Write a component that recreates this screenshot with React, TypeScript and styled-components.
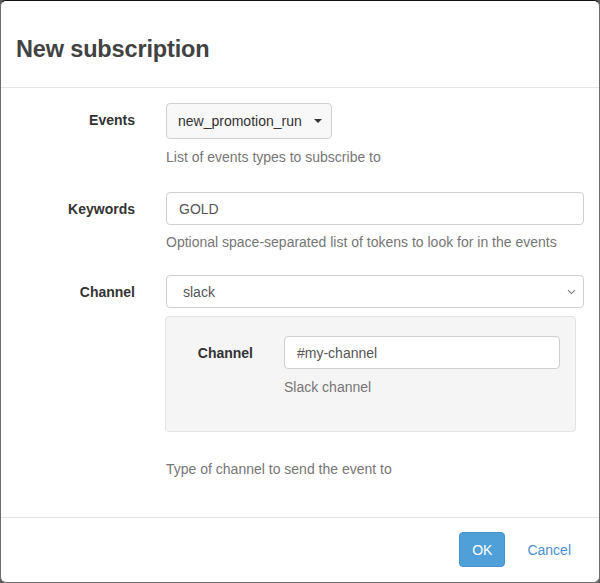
import React from "react";
import styled, { createGlobalStyle } from "styled-components";

const Global = createGlobalStyle`
  html, body { margin: 0; padding: 0; background: #5b5b5b; }
  body { font-family: "Liberation Sans", Arial, Helvetica, sans-serif; font-size: 14px; color: #333; }
  * { box-sizing: border-box; }
`;

const Modal = styled.div`
  width: 600px;
  height: 583px;
  background: #fff;
  border: 1px solid #6d6d6d;
  border-top-color: #111;
  border-radius: 6px;
  display: flex;
  flex-direction: column;
  overflow: hidden;
`;

const Header = styled.div`
  padding: 35px 15px 25px;
  border-bottom: 1px solid #e5e5e5;
`;

const Title = styled.h4`
  margin: 0;
  font-size: 23.5px;
  line-height: 26px;
  font-weight: 700;
  color: #424242;
  letter-spacing: -0.15px;
`;

const Body = styled.div`
  flex: 1;
  padding: 15px 15px 0 0;
  display: flex;
  flex-direction: column;
`;

const Group = styled.div<{ $mb?: number }>`
  display: flex;
  margin-bottom: ${(p) => p.$mb ?? 25}px;
`;

const Label = styled.label<{ $w: number; $pr: number }>`
  flex: 0 0 ${(p) => p.$w}px;
  padding-right: ${(p) => p.$pr}px;
  padding-top: 7px;
  line-height: 20px;
  text-align: right;
  font-weight: 700;
  color: #333;
`;

const Control = styled.div<{ $pl: number }>`
  flex: 1;
  min-width: 0;
  padding-left: ${(p) => p.$pl}px;
`;

const DropButton = styled.button`
  display: inline-flex;
  align-items: center;
  height: 36px;
  padding: 0 9px 0 11px;
  background: #f8f8f8;
  border: 1px solid #cfcfcf;
  border-radius: 4px;
  font: inherit;
  color: #333;
  gap: 12px;
`;

const Caret = styled.span`
  width: 0;
  height: 0;
  border-left: 4px solid transparent;
  border-right: 4px solid transparent;
  border-top: 4px solid #333;
`;

const Input = styled.div`
  height: 33px;
  display: flex;
  align-items: center;
  padding: 0 12px;
  border: 1px solid #cfcfcf;
  border-radius: 4px;
  background: #fff;
  color: #555;
  line-height: 20px;
`;

const Select = styled(Input)`
  justify-content: space-between;
  padding: 0 7px 0 16px;
`;

const Help = styled.div<{ $mt: number }>`
  margin-top: ${(p) => p.$mt}px;
  line-height: 20px;
  color: #767676;
`;

const Well = styled.div`
  margin-top: 8px;
  background: #f5f5f5;
  border: 1px solid #e3e3e3;
  border-radius: 4px;
  padding: 19px 15px 34px 0;
  margin-right: 8px;
  margin-left: -1px;
`;

const Footer = styled.div`
  border-top: 1px solid #e5e5e5;
  padding: 14px 15px 15px;
  display: flex;
  justify-content: flex-end;
  gap: 9px;
`;

const Button = styled.button<{ $primary?: boolean }>`
  height: 35px;
  padding: 0 12px;
  font: inherit;
  font-size: 14px;
  border-radius: 4px;
  border: 1px solid ${(p) => (p.$primary ? "#4593cd" : "transparent")};
  background: ${(p) => (p.$primary ? "#4f9fd8" : "transparent")};
  color: ${(p) => (p.$primary ? "#fff" : "#4a8fd4")};
`;

const Chevron = () => (
  <svg width="9" height="6" viewBox="0 0 9 6">
    <path d="M1 1.2 L4.5 4.6 L8 1.2" fill="none" stroke="#777" strokeWidth="1.1" />
  </svg>
);

export default function App() {
  return (
    <>
      <Global />
      <Modal>
        <Header>
          <Title>New subscription</Title>
        </Header>
        <Body>
          <Group $mb={25}>
            <Label $w={149} $pr={15}>Events</Label>
            <Control $pl={16}>
              <DropButton>
                new_promotion_run
                <Caret />
              </DropButton>
              <Help $mt={8}>List of events types to subscribe to</Help>
            </Control>
          </Group>
          <Group $mb={23}>
            <Label $w={149} $pr={15}>Keywords</Label>
            <Control $pl={16}>
              <Input>GOLD</Input>
              <Help $mt={7}>Optional space-separated list of tokens to look for in the events</Help>
            </Control>
          </Group>
          <Group>
            <Label $w={149} $pr={15}>Channel</Label>
            <Control $pl={16}>
              <Select>
                slack
                <Chevron />
              </Select>
              <Well>
                <Group $mb={0}>
                  <Label $w={87} $pr={0}>Channel</Label>
                  <Control $pl={31}>
                    <Input>#my-channel</Input>
                    <Help $mt={8}>Slack channel</Help>
                  </Control>
                </Group>
              </Well>
              <Help $mt={27}>Type of channel to send the event to</Help>
            </Control>
          </Group>
        </Body>
        <Footer>
          <Button $primary>OK</Button>
          <Button>Cancel</Button>
        </Footer>
      </Modal>
    </>
  );
}
